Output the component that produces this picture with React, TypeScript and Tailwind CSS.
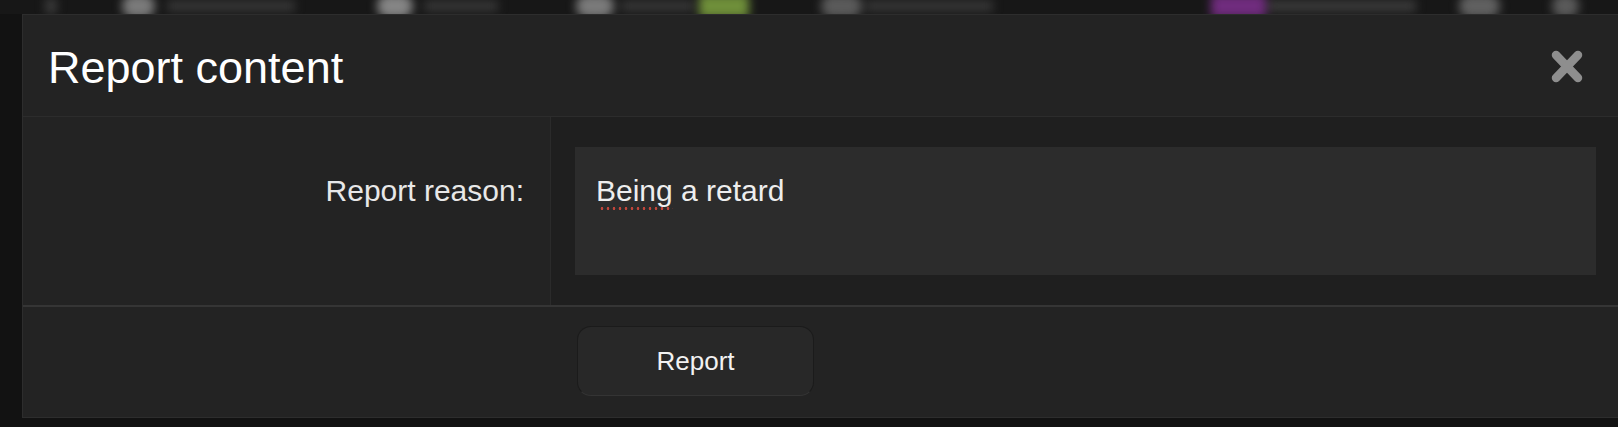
import { ReactNode } from "react";

// blurred top navigation that sits behind the dialog
const NavBar = () => (
  <div className="h-[14px] overflow-hidden bg-[#171717]">
    <div className="flex h-[30px] -mt-[9px] items-center blur-[5px]">
      <div className="ml-[45px] h-[18px] w-[12px] rounded-full bg-[#3a3a3a]" />
      <div className="ml-[65px] h-[24px] w-[33px] rounded-full bg-[#7a7a7a]" />
      <div className="ml-[12px] h-[12px] w-[128px] bg-[#353535]" />
      <div className="ml-[82px] h-[24px] w-[36px] rounded-full bg-[#858585]" />
      <div className="ml-[11px] h-[12px] w-[74px] bg-[#353535]" />
      <div className="ml-[78px] h-[24px] w-[38px] rounded-full bg-[#7a7a7a]" />
      <div className="ml-[7px] h-[12px] w-[73px] bg-[#353535]" />
      <div className="ml-[5px] h-[24px] w-[50px] rounded bg-[#6f8f3a]" />
      <div className="ml-[72px] h-[24px] w-[41px] rounded-full bg-[#5a5a5a]" />
      <div className="ml-[4px] h-[12px] w-[127px] bg-[#353535]" />
      <div className="ml-[218px] h-[24px] w-[55px] rounded bg-[#702c7e]" />
      <div className="ml-[2px] h-[12px] w-[148px] bg-[#3a3a3a]" />
      <div className="ml-[43px] h-[24px] w-[41px] rounded-full bg-[#606060]" />
      <div className="ml-[52px] h-[24px] w-[27px] rounded-full bg-[#5a5a5a]" />
    </div>
  </div>
);

const CloseIcon = () => (
  <svg width="32" height="33" viewBox="0 0 32 33" className="shrink-0">
    <g stroke="#8e8e8e" strokeWidth="8.5" strokeLinecap="round">
      <line x1="5" y1="5" x2="27" y2="28" />
      <line x1="27" y1="5" x2="5" y2="28" />
    </g>
  </svg>
);

// word with the browser's spell-check dots under it
const Misspelled: React.FC<{ children: ReactNode }> = ({ children }) => (
  <span className="relative">
    {children}
    <span className="absolute left-[3px] right-0 -bottom-[3px] h-[3px] bg-[radial-gradient(circle,#c2453a_1.1px,transparent_1.6px)] bg-[length:6px_3px]" />
  </span>
);

const FormRow: React.FC<{ label: string; children: ReactNode }> = ({
  label,
  children,
}) => (
  <div className="flex border-b-2 border-[#353535]">
    <div className="w-[528px] shrink-0 border-r border-[#2b2b2b] pr-[26px] pt-[59px] text-right text-[30px] leading-none text-[#e8e8e8]">
      {label}
    </div>
    <div className="flex-1 bg-[#1f1f1f] pl-[24px] pr-[22px] py-[30px]">
      {children}
    </div>
  </div>
);

export default function App() {
  return (
    <div className="h-[427px] w-[1618px] overflow-hidden bg-[#121212] font-['Liberation_Sans',Arial,sans-serif]">
      <NavBar />
      <div className="ml-[22px] border-y border-l border-[#2d2d2d] bg-[#232323]">
        <div className="flex h-[102px] items-start border-b border-[#2c2c2c] pl-[25px] pr-[35px] pt-[30px]">
          <h1 className="flex-1 text-[45px] leading-none text-white">
            Report content
          </h1>
          <button className="mt-[5px]">
            <CloseIcon />
          </button>
        </div>

        <FormRow label="Report reason:">
          <div className="h-[128px] bg-[#2c2c2c] pl-[21px] pt-[29px] text-[30px] leading-none text-[#eeeeee]">
            <Misspelled>Being</Misspelled> a retard
          </div>
        </FormRow>

        <div className="flex h-[110px] items-start pl-[554px] pt-[19px]">
          <button className="flex h-[70px] w-[237px] items-center justify-center rounded-[14px] border border-[#1b1b1b] border-b-[#343434] bg-[#282828] text-[26px] leading-none text-[#f2f2f2]">
            Report
          </button>
        </div>
      </div>
    </div>
  );
}
